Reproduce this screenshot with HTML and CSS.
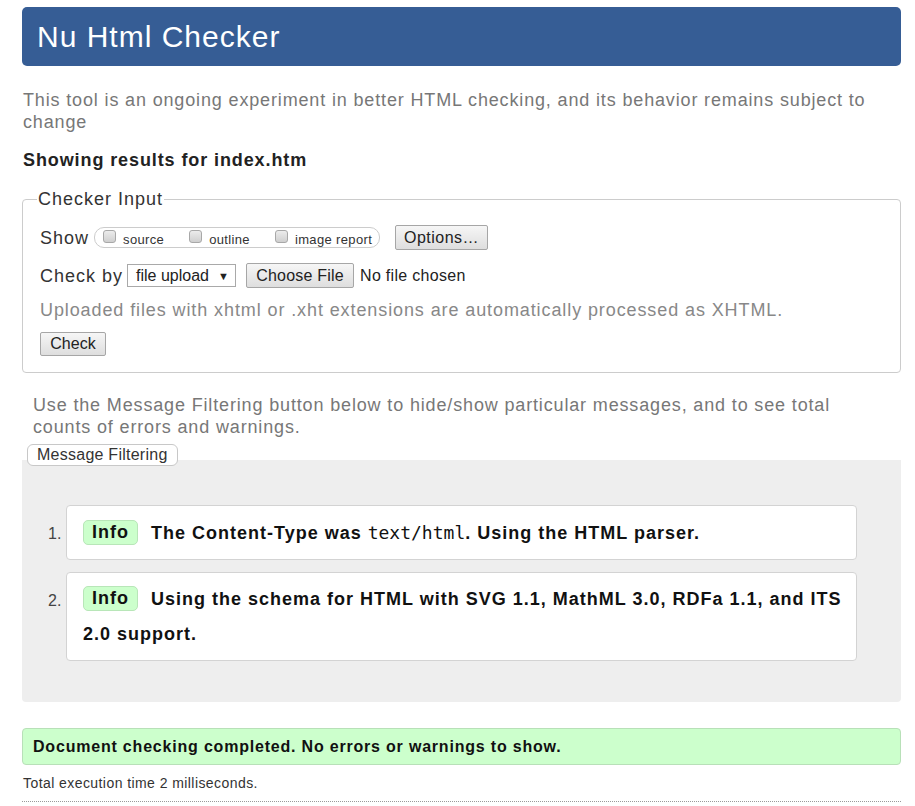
FILE: index.html
```html
<!DOCTYPE html>
<html lang="en">
<head>
<meta charset="utf-8">
<title>Nu Html Checker</title>
<link rel="stylesheet" href="styles.css">
</head>
<body>
<div class="page">
  <h1 class="title">Nu Html Checker</h1>
  <p class="intro">This tool is an ongoing experiment in better HTML checking, and its behavior remains subject to change</p>
  <p class="showing">Showing results for index.htm</p>
  <fieldset class="checker">
    <legend>Checker Input</legend>
    <div class="row row-show">
      <span class="lbl">Show</span>
      <span class="pill">
        <span class="opt"><span class="box"></span><span class="optlbl">source</span></span>
        <span class="opt"><span class="box"></span><span class="optlbl">outline</span></span>
        <span class="opt"><span class="box"></span><span class="optlbl">image report</span></span>
      </span>
      <span class="btn btn-options">Options…</span>
    </div>
    <div class="row row-by">
      <span class="lbl">Check by</span>
      <span class="select">file upload <span class="arrow">▼</span></span>
      <span class="btn btn-file">Choose File</span>
      <span class="nofile">No file chosen</span>
    </div>
    <p class="hint">Uploaded files with xhtml or .xht extensions are automatically processed as XHTML.</p>
    <span class="btn btn-check">Check</span>
  </fieldset>
  <p class="filterhint">Use the Message Filtering button below to hide/show particular messages, and to see total counts of errors and warnings.</p>
  <span class="filterbtn">Message Filtering</span>
  <div class="results">
    <ol class="msgs">
      <li class="msg"><span class="badge">Info</span>The Content-Type was <code>text/html</code>. Using the HTML parser.</li>
      <li class="msg"><span class="badge">Info</span>Using the schema for HTML with SVG 1.1, MathML 3.0, RDFa 1.1, and ITS 2.0 support.</li>
    </ol>
  </div>
  <p class="success">Document checking completed. No errors or warnings to show.</p>
  <p class="time">Total execution time 2 milliseconds.</p>
  <hr class="dotted">
</div>
</body>
</html>
```
FILE: styles.css
```css
html, body {
  margin: 0;
  padding: 0;
  background: #fff;
}
body {
  font-family: "Liberation Sans", Arial, sans-serif;
  color: #222;
}
.page {
  width: 879px;
  margin-left: 22px;
  padding-top: 7px;
}
.title {
  margin: 0;
  height: 59px;
  box-sizing: border-box;
  background: #365d95;
  border-radius: 5px;
  color: #fff;
  font-weight: normal;
  font-size: 30px;
  letter-spacing: 1px;
  line-height: 60px;
  padding-left: 15px;
}
.intro {
  margin: 23px 0 0 1px;
  font-size: 18px;
  letter-spacing: 0.85px;
  line-height: 22px;
  color: #777;
}
.showing {
  margin: 16px 0 0 1px;
  font-size: 18px;
  letter-spacing: 0.9px;
  font-weight: bold;
  line-height: 22px;
  color: #222;
}
.checker {
  margin: 17px 0 0 0;
  border: 1px solid #ccc;
  border-radius: 4px;
  padding: 0 17px 16px 17px;
  min-width: 0;
}
.checker legend {
  font-size: 18px;
  letter-spacing: 1px;
  color: #333;
  padding: 0 1px;
  margin-left: -3px;
  line-height: 22px;
}
.row {
  display: flex;
  align-items: center;
  font-size: 18px;
  color: #333;
}
.row-show {
  height: 25px;
  margin-top: 15px;
}
.lbl {
  line-height: 22px;
  letter-spacing: 1px;
}
.pill {
  display: flex;
  align-items: center;
  gap: 25px;
  margin-left: 5px;
  width: 286px;
  height: 21px;
  box-sizing: border-box;
  border: 1px solid #ccc;
  border-radius: 10px;
  padding-left: 8px;
}
.opt {
  display: flex;
  align-items: center;
  white-space: nowrap;
}
.box {
  width: 13px;
  height: 13px;
  box-sizing: border-box;
  border: 1px solid #a8a8a8;
  border-radius: 3px;
  background: linear-gradient(#ececec, #cfcfcf);
  margin-top: -3px;
}
.optlbl {
  font-size: 13px;
  letter-spacing: 0.35px;
  margin-left: 7px;
  line-height: 15px;
  margin-top: 4px;
  color: #333;
}
.btn {
  display: inline-flex;
  align-items: center;
  justify-content: center;
  box-sizing: border-box;
  height: 25px;
  border: 1px solid #a6a6a6;
  border-radius: 2px;
  background: linear-gradient(#f6f6f6, #dedede);
  font-size: 16px;
  color: #222;
}
.btn-options {
  width: 93px;
  margin-left: 15px;
  letter-spacing: 0.5px;
}
.row-by {
  margin-top: 13px;
  height: 25px;
}
.select {
  display: inline-flex;
  align-items: center;
  box-sizing: border-box;
  margin-left: 4px;
  width: 109px;
  height: 23px;
  border: 1px solid #a9a9a9;
  background: #fff;
  font-size: 16px;
  color: #222;
  padding-left: 8px;
}
.arrow {
  font-size: 11px;
  margin-left: 9px;
}
.btn-file {
  width: 108px;
  margin-left: 10px;
  letter-spacing: 0.2px;
}
.nofile {
  font-size: 16px;
  letter-spacing: 0.3px;
  color: #222;
  margin-left: 6px;
}
.hint {
  margin: 11px 0 0 0;
  font-size: 18px;
  letter-spacing: 0.9px;
  line-height: 22px;
  color: #888;
}
.btn-check {
  width: 66px;
  height: 24px;
  margin-top: 11px;
}
.filterhint {
  margin: 21px 22px 0 11px;
  font-size: 18px;
  letter-spacing: 0.85px;
  line-height: 22px;
  color: #777;
}
.filterbtn {
  position: relative;
  z-index: 1;
  display: inline-block;
  margin: 6px 0 0 5px;
  height: 22px;
  box-sizing: border-box;
  padding: 0 9px;
  border: 1px solid #c8c8c8;
  border-radius: 6px;
  background: #fff;
  font-size: 16px;
  letter-spacing: 0.25px;
  line-height: 20px;
  color: #333;
}
.results {
  margin-top: -6px;
  background: #eee;
  border-radius: 0 0 4px 4px;
  padding: 45px 44px 41px 44px;
}
.msgs {
  margin: 0;
  padding: 0;
  list-style: none;
  counter-reset: msg;
  display: flex;
  flex-direction: column;
  gap: 12px;
}
.msg {
  counter-increment: msg;
  position: relative;
  display: block;
  background: #fff;
  border: 1px solid #d3d3d3;
  border-radius: 4px;
  padding: 9px 10px 8px 16px;
  font-size: 18px;
  font-weight: bold;
  letter-spacing: 1px;
  line-height: 35px;
  color: #111;
}
.msg::before {
  content: counter(msg) ".";
  position: absolute;
  left: -19px;
  top: 10px;
  font-size: 16px;
  font-weight: normal;
  letter-spacing: 0;
  color: #444;
}
.badge {
  display: inline-block;
  box-sizing: border-box;
  height: 25px;
  line-height: 23px;
  padding: 0 8px;
  background: #ccffcc;
  border: 1px solid #b8e6b8;
  border-radius: 5px;
  margin-right: 13px;
  vertical-align: 1px;
  letter-spacing: 1px;
}
.msg code {
  font-family: "DejaVu Sans Mono", "Liberation Mono", monospace;
  font-weight: normal;
  font-size: 18px;
  letter-spacing: 0;
}
.success {
  margin: 26px 0 0 0;
  height: 37px;
  box-sizing: border-box;
  background: #ccffcc;
  border: 1px solid #b8e0b8;
  border-radius: 4px;
  padding-left: 10px;
  font-size: 16px;
  letter-spacing: 0.8px;
  font-weight: bold;
  line-height: 35px;
  color: #111;
}
.time {
  margin: 9px 0 0 1px;
  font-size: 14px;
  letter-spacing: 0.43px;
  line-height: 18px;
  color: #333;
}
.dotted {
  margin: 9px 0 0 0;
  border: 0;
  border-top: 1px dotted #999;
  height: 0;
}
```
